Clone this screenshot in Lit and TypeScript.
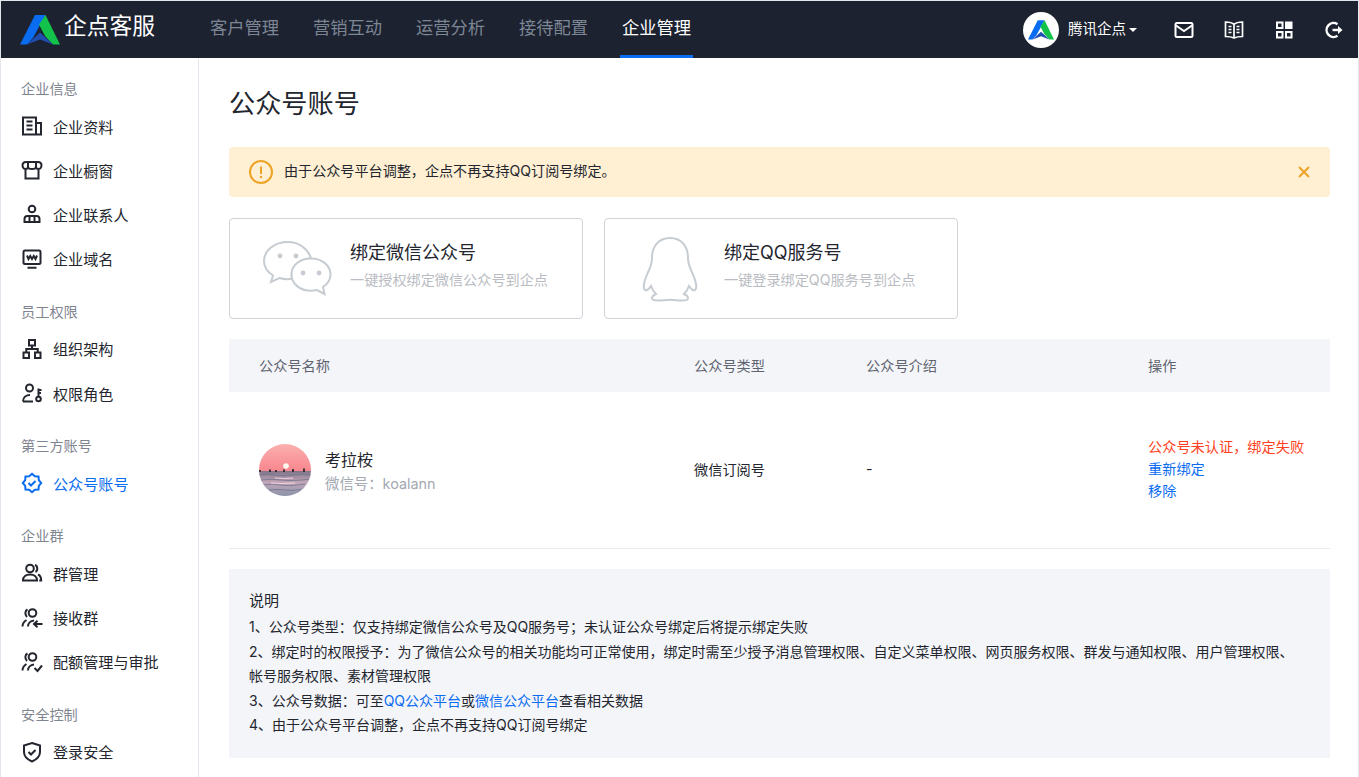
import { html, svg, LitElement, css } from 'lit';
import { customElement } from 'lit/decorators.js';

const logoMark = (w: number, h: number) => html`
  <svg width=${w} height=${h} viewBox="0 0 40 30">
    <path d="M15 0H25.5L13 23 7 29.500H0Z" fill="#0a6cf0" />
    <path d="M25.500 0 40 29.500H33L25 21 19 9.500Z" fill="#12c24a" />
    <path d="M7 29.500 20 17.500 33 29.500 20 24.500Z" fill="#1f4db0" />
  </svg>
`;

const icons: Record<string, unknown> = {
  doc: svg`<path d="M2 2.500h13v17H2zM15 8h5v11.500h-5M5.500 6.500h6M5.500 10.500h6M5.500 14.500h6" />`,
  shop: svg`<path d="M5 3h12c2 0 3.500 1.500 3.500 3.500S19 10 17.500 10 15 9 15 7.500C15 9 13.500 10 11 10S7 9 7 7.500C7 9 6 10 4.500 10S1.500 8.500 1.500 6.500 3 3 5 3ZM7 4v3.500M15 4v3.500M4.500 10v9.500h13V10" />`,
  contact: svg`<circle cx="11" cy="6" r="3.300" /><path d="M3.500 19v-3a3 3 0 0 1 3-3h9a3 3 0 0 1 3 3v3ZM8.500 14v5M13.500 14v5" />`,
  domain: svg`<rect x="2.500" y="2.500" width="17" height="13.500" rx="1.500" /><path d="M6.500 19.800h9M6 7.500l1.500 3.500 1.750-3 1.750 3 1.750-3 1.750 3L16 7.500" />`,
  org: svg`<path d="M8 2h6v5.500H8zM2.500 14.500H8V20H2.500zM14 14.500h5.500V20H14zM11 7.500V11M5.250 14.500V11h11.500v3.500" />`,
  role: svg`<circle cx="8.500" cy="6" r="3.500" /><path d="M2 19.500c0-4 3-6.500 7-6.500M2 19.500h10" /><circle cx="17.500" cy="17" r="2.300" /><path d="M17.500 14.700V6.500M17.500 8h3M17.500 11h2.500" />`,
  badge: svg`<path d="M11 1.800 13.800 4.200 17.500 4.500 17.800 8.200 20.200 11 17.800 13.800 17.500 17.500 13.800 17.800 11 20.200 8.200 17.800 4.500 17.500 4.200 13.800 1.800 11 4.200 8.200 4.500 4.500 8.200 4.200Z" /><path d="M7.500 11l2.500 2.500 4.500-4.500" />`,
  group: svg`<circle cx="9" cy="6.500" r="3.800" /><path d="M2 18.500c0-3.800 3-6 7-6s7 2.200 7 6ZM14 3c2.500.5 3.300 5.500.5 7M17 12.500c2 .8 3.200 2.800 3.200 6h-2" />`,
  receive: svg`<circle cx="11.500" cy="6" r="3.800" /><path d="M6.500 2.500c-2.500 1.200-3 5-.5 7.500M1.500 19.500c0-3 1.500-5 4-6.500M7 19.500c0-3 2.500-5.500 6-6M21.500 17h-8.500M16.500 13.800 13 17l3.500 3.200" />`,
  quota: svg`<circle cx="11.500" cy="6" r="3.800" /><path d="M6.500 2.500c-2.500 1.200-3 5-.5 7.500M1.500 19.500c0-3 1.500-5 4-6.500M7 19.500c0-3 2.500-5.500 6-6M13.500 17l3 3 4.500-5.500" />`,
  shield: svg`<path d="M11 2 19 4.500V11c0 4.500-3.500 7.500-8 9.500C6.500 18.500 3 15.500 3 11V4.500Z" /><path d="M7.500 11l2.500 2.500 4.500-4.500" />`,
};

const sideIcon = (name: string) => html`
  <svg class="side-icon" width="22" height="22" viewBox="0 0 22 22">${icons[name]}</svg>
`;

const menu = [
  { title: '企业信息', items: [['doc', '企业资料'], ['shop', '企业橱窗'], ['contact', '企业联系人'], ['domain', '企业域名']] },
  { title: '员工权限', items: [['org', '组织架构'], ['role', '权限角色']] },
  { title: '第三方账号', items: [['badge', '公众号账号']] },
  { title: '企业群', items: [['group', '群管理'], ['receive', '接收群'], ['quota', '配额管理与审批']] },
  { title: '安全控制', items: [['shield', '登录安全']] },
];

const navItems = ['客户管理', '营销互动', '运营分析', '接待配置', '企业管理'];

@customElement('app-root')
export class AppRoot extends LitElement {
  static styles = css`
    :host {
      display: block;
      height: 777px;
      overflow: hidden;
      font-family: Inter, 'Noto Sans CJK SC', 'Liberation Sans', sans-serif;
      color: #23262e;
      background: #fff;
    }

    .frame {
      box-sizing: border-box;
      height: 777px;
      border: 1px solid #e4e6ee;
      border-bottom: 0;
      display: flex;
      flex-direction: column;
      overflow: hidden;
    }

    /* Top bar */
    .topbar {
      flex: none;
      height: 57px;
      background: #1c2230;
      display: flex;
      align-items: center;
      color: #fff;
    }

    .brand {
      width: 207px;
      padding-left: 19px;
      box-sizing: border-box;
      display: flex;
      align-items: center;
      gap: 4px;
      font-size: 22.75px;
      flex: none;
    }

    .brand span {
      margin-top: -10px;
    }

    .nav {
      display: flex;
      height: 100%;
      gap: 30px;
    }

    .nav-item {
      box-sizing: border-box;
      height: 100%;
      display: flex;
      align-items: center;
      font-size: 17.25px;
      color: #7d8694;
      padding: 0 2px 4px;
      border-bottom: 3px solid transparent;
    }

    .nav-item.active {
      color: #fff;
      border-bottom-color: #0a6cf0;
    }

    .top-right {
      margin-left: auto;
      display: flex;
      align-items: center;
      padding-right: 14px;
    }

    .account {
      display: flex;
      align-items: center;
      font-size: 14.5px;
      margin-right: 37px;
    }

    .account span {
      margin-top: -4px;
    }

    .avatar-logo {
      width: 36px;
      height: 36px;
      border-radius: 50%;
      background: #fff;
      display: flex;
      align-items: center;
      justify-content: center;
      margin-right: 9px;
    }

    .caret {
      width: 0;
      height: 0;
      margin-left: 3px;
      border: 4px solid transparent;
      border-top: 4px solid #fff;
      border-bottom: 0;
    }

    .top-icons {
      display: flex;
      gap: 30px;
    }

    .top-icons svg {
      fill: none;
      stroke: #fff;
      stroke-width: 2;
      display: block;
    }

    /* Sidebar */
    .body {
      flex: 1;
      min-height: 0;
      display: flex;
    }

    .sidebar {
      flex: none;
      width: 198px;
      box-sizing: border-box;
      border-right: 1px solid #e4e6ee;
      padding: 16px 0 0 20px;
    }

    .group {
      margin-bottom: 16px;
    }

    .group-title {
      font-size: 14.2px;
      line-height: 30px;
      height: 30px;
      color: #7f8590;
    }

    .side-item {
      height: 44.2px;
      display: flex;
      align-items: center;
      font-size: 15.1px;
      gap: 10px;
      color: #23262e;
    }

    .side-item span {
      margin-top: -1px;
    }

    .side-item.active {
      color: #0a6cf0;
    }

    .side-icon {
      flex: none;
      fill: none;
      stroke: currentColor;
      stroke-width: 2;
    }

    /* Content */
    .main {
      flex: 1;
      min-width: 0;
      padding: 0 28px 0 30px;
    }

    h1 {
      margin: 0;
      height: 89px;
      line-height: 91px;
      font-size: 26.2px;
      font-weight: 400;
      color: #23262e;
    }

    .alert {
      height: 50px;
      background: #ffefd3;
      border-radius: 4px;
      display: flex;
      align-items: center;
      font-size: 14.1px;
      padding: 0 20px;
      gap: 11px;
    }

    .alert-text {
      flex: 1;
      margin-top: -5px;
    }

    .cards {
      display: flex;
      gap: 21px;
      margin-top: 21px;
    }

    .card {
      box-sizing: border-box;
      width: 354px;
      height: 101px;
      border: 1px solid #d0d3d8;
      border-radius: 4px;
      display: flex;
      align-items: center;
    }

    .card-icon {
      flex: none;
      box-sizing: border-box;
      width: 120px;
      padding-left: 32px;
      display: flex;
    }

    .card-icon.qq {
      width: 119px;
      padding-left: 37px;
    }

    .card-icon svg {
      fill: none;
      stroke: #c6ccd1;
      stroke-width: 2;
    }

    .card-text {
      padding-bottom: 8px;
    }

    .card-title {
      font-size: 18px;
      line-height: 26px;
    }

    .card-sub {
      font-size: 14.15px;
      line-height: 20px;
      margin-top: 4px;
      color: #b9bcc2;
    }

    .table {
      margin-top: 20px;
      font-size: 14.2px;
    }

    .row {
      display: grid;
      grid-template-columns: 435px 172px 282px 1fr;
      padding-left: 30px;
      align-items: center;
      box-sizing: border-box;
    }

    .row.head {
      height: 53px;
      padding-bottom: 2px;
      background: #f4f5f9;
      color: #5f6470;
    }

    .row.data {
      height: 157px;
      border-bottom: 1px solid #e8eaef;
    }

    .cell {
      margin-top: -3px;
    }

    .profile {
      display: flex;
      align-items: center;
      gap: 14px;
    }

    .profile-text {
      margin-top: 3px;
    }

    .profile-name {
      font-size: 16px;
      line-height: 22px;
      margin-bottom: 2px;
    }

    .profile-id {
      font-size: 14.4px;
      line-height: 22px;
      color: #a4a9b3;
    }

    .ops {
      line-height: 22px;
    }

    .ops .err {
      color: #ff4222;
    }

    a {
      color: #0a6cf0;
      text-decoration: none;
    }

    .ops a {
      display: block;
    }

    .notes {
      margin-top: 20px;
      height: 189px;
      box-sizing: border-box;
      background: #f4f5f9;
      padding: 20px 24px 0 20px;
      font-size: 14px;
      line-height: 24.5px;
    }

    .notes-title {
      font-size: 15px;
      margin-bottom: 1.5px;
    }
  `;

  private renderSidebar() {
    return html`
      <aside class="sidebar">
        ${menu.map(
          (group) => html`
            <div class="group">
              <div class="group-title">${group.title}</div>
              ${group.items.map(
                ([icon, label]) => html`
                  <div class="side-item ${label === '公众号账号' ? 'active' : ''}">
                    ${sideIcon(icon)}<span>${label}</span>
                  </div>
                `
              )}
            </div>
          `
        )}
      </aside>
    `;
  }

  private renderTopbar() {
    return html`
      <header class="topbar">
        <div class="brand">${logoMark(40, 30)}<span>企点客服</span></div>
        <nav class="nav">
          ${navItems.map(
            (item) => html`<div class="nav-item ${item === '企业管理' ? 'active' : ''}">${item}</div>`
          )}
        </nav>
        <div class="top-right">
          <div class="account">
            <div class="avatar-logo">${logoMark(26, 20)}</div>
            <span>腾讯企点</span><i class="caret"></i>
          </div>
          <div class="top-icons">
            <svg width="20" height="20" viewBox="0 0 20 20">
              <rect x="1.500" y="3" width="17" height="14" rx="1.500" />
              <path d="M2 5.500l8 5.500 8-5.500" />
            </svg>
            <svg width="20" height="20" viewBox="0 0 20 20">
              <path d="M10 4.500C8 2.500 5 2 1.500 2v14.500c3.500 0 6.500.5 8.500 1.500 2-1 5-1.500 8.500-1.500V2C15 2 12 2.500 10 4.500ZM10 4.500V18M4.500 6.500h3M4.500 9.500h3M4.500 12.500h3M12.500 6.500h3M12.500 9.500h3M12.500 12.500h3" stroke-width="1.700" />
            </svg>
            <svg width="20" height="20" viewBox="0 0 20 20">
              <path d="M3 2.500h5.500V8H3zM3 12h5.500v5.500H3zM12 12h5.500v5.500H12z" />
              <path d="M11 1.500h7.500V9H11z" fill="#fff" stroke="none" />
            </svg>
            <svg width="20" height="20" viewBox="0 0 20 20">
              <path d="M13.500 4.200A7 7 0 1 0 13.500 15.800" stroke-width="2.400" />
              <path d="M8.500 10h6" stroke-width="2.400" />
              <path d="M14 6 18.500 10 14 14Z" fill="#fff" stroke="none" />
            </svg>
          </div>
        </div>
      </header>
    `;
  }

  private renderCards() {
    return html`
      <div class="cards">
        <div class="card">
          <div class="card-icon">
            <svg width="70" height="56" viewBox="0 0 70 56">
              <path d="M26 1C12.500 1 2 9.500 2 20c0 6 3.500 11 9 14.500L9 41l8.500-4c2.500.8 5 1.200 8 1.200 1.500 0 3-.1 4.500-.4" />
              <path d="M30 37.800C28 26 37 17.500 49 17.500c-2.500-9.500-12-16.500-23-16.500" />
              <path d="M49 17.500c11 0 19.500 7 19.500 16 0 5-3 9.500-7.500 12.500l1.500 7-7.500-4c-2 .5-4 .8-6 .8-11 0-19.500-7-19.500-16.300s8.500-16 19.500-16Z" fill="#fff" />
              <circle cx="18" cy="15" r="2.400" fill="#c6ccd1" stroke="none" />
              <circle cx="34" cy="15" r="2.400" fill="#c6ccd1" stroke="none" />
              <circle cx="41" cy="32" r="2.400" fill="#c6ccd1" stroke="none" />
              <circle cx="57" cy="32" r="2.400" fill="#c6ccd1" stroke="none" />
            </svg>
          </div>
          <div class="card-text">
            <div class="card-title">绑定微信公众号</div>
            <div class="card-sub">一键授权绑定微信公众号到企点</div>
          </div>
        </div>
        <div class="card">
          <div class="card-icon qq">
            <svg width="56" height="66" viewBox="0 0 56 66">
              <path d="M28 2C16 2 10 11 10 22c0 8-3 11-6 19-2 5-3 11-1 13 1.500 1.200 4-1 6-4 1 3 3 6 5 8-2.500 1-4 2-4 4s3 2.500 6 2.500c4 0 8-.7 12-.7s8 .7 12 .7c3 0 6-.5 6-2.500s-1.500-3-4-4c2-2 4-5 5-8 2 3 4.500 5.200 6 4 2-2 1-8-1-13-3-8-6-11-6-19C46 11 40 2 28 2Z" />
            </svg>
          </div>
          <div class="card-text">
            <div class="card-title">绑定QQ服务号</div>
            <div class="card-sub">一键登录绑定QQ服务号到企点</div>
          </div>
        </div>
      </div>
    `;
  }

  private renderAvatar() {
    return html`
      <svg width="52" height="52" viewBox="0 0 52 52" style="flex:none">
        <defs>
          <linearGradient id="sky" x1="0" y1="0" x2="0" y2="1">
            <stop offset="0" stop-color="#fab0ae" />
            <stop offset="1" stop-color="#f9858e" />
          </linearGradient>
          <linearGradient id="sea" x1="0" y1="0" x2="0" y2="1">
            <stop offset="0" stop-color="#7f7488" />
            <stop offset="0.45" stop-color="#c3a6b8" />
            <stop offset="1" stop-color="#8b93aa" />
          </linearGradient>
          <clipPath id="round"><circle cx="26" cy="26" r="26" /></clipPath>
        </defs>
        <g clip-path="url(#round)">
          <rect width="52" height="28" fill="url(#sky)" />
          <rect y="27" width="52" height="25" fill="url(#sea)" />
          <circle cx="27" cy="22" r="2.800" fill="#fff6ee" />
          <path d="M0 31q8-1.500 16 0t18 0 18 0M2 36q10-1.500 20 0t30-1M4 41q10-1.500 18 0t24-1M10 46q8-1 16 0t16-.5" fill="none" stroke="#66708a" stroke-width="1" opacity="0.7" />
          <path d="M16 34q8 1 18 0M12 39q10 1 24 0" fill="none" stroke="#f2d0dc" stroke-width="1" />
          <path d="M0 26h2v2H0zM10 25.500h2v2.500h-2zM16 26h2v2h-2zM24 25.500h2v2.500h-2zM33 25h2v3h-2zM44 24.500h2v3.500h-2z" fill="#3a3038" />
        </g>
      </svg>
    `;
  }

  protected render() {
    return html`
      <div class="frame">
        ${this.renderTopbar()}
        <div class="body">
          ${this.renderSidebar()}
          <main class="main">
            <h1>公众号账号</h1>
            <div class="alert">
              <svg width="24" height="24" viewBox="0 0 24 24">
                <circle cx="12" cy="12" r="11" fill="none" stroke="#eca326" stroke-width="2" />
                <path d="M12 6.500v7.500" stroke="#eca326" stroke-width="2" />
                <circle cx="12" cy="17" r="1.200" fill="#eca326" />
              </svg>
              <div class="alert-text">由于公众号平台调整，企点不再支持QQ订阅号绑定。</div>
              <svg width="12" height="12" viewBox="0 0 12 12">
                <path d="M1 1l10 10M11 1 1 11" stroke="#eca326" stroke-width="2" />
              </svg>
            </div>
            ${this.renderCards()}
            <div class="table">
              <div class="row head">
                <div>公众号名称</div>
                <div>公众号类型</div>
                <div>公众号介绍</div>
                <div>操作</div>
              </div>
              <div class="row data">
                <div class="profile">
                  ${this.renderAvatar()}
                  <div class="profile-text">
                    <div class="profile-name">考拉桉</div>
                    <div class="profile-id">微信号：koalann</div>
                  </div>
                </div>
                <div class="cell">微信订阅号</div>
                <div class="cell">-</div>
                <div class="cell ops">
                  <div class="err">公众号未认证，绑定失败</div>
                  <a href="#">重新绑定</a>
                  <a href="#">移除</a>
                </div>
              </div>
            </div>
            <div class="notes">
              <div class="notes-title">说明</div>
              <div>1、公众号类型：仅支持绑定微信公众号及QQ服务号；未认证公众号绑定后将提示绑定失败</div>
              <div>2、绑定时的权限授予：为了微信公众号的相关功能均可正常使用，绑定时需至少授予消息管理权限、自定义菜单权限、网页服务权限、群发与通知权限、用户管理权限、帐号服务权限、素材管理权限</div>
              <div>3、公众号数据：可至<a href="#">QQ公众平台</a>或<a href="#">微信公众平台</a>查看相关数据</div>
              <div>4、由于公众号平台调整，企点不再支持QQ订阅号绑定</div>
            </div>
          </main>
        </div>
      </div>
    `;
  }
}
